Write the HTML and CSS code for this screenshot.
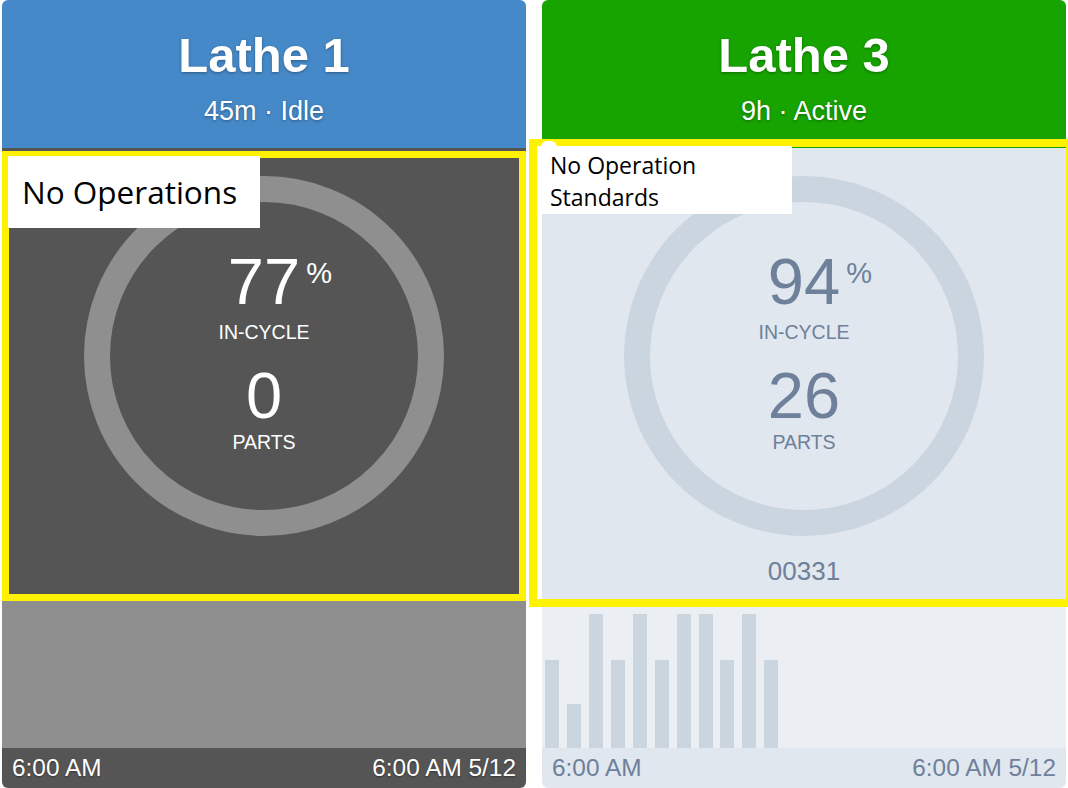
FILE: index.html
```html
<!DOCTYPE html>
<html>
<head>
<meta charset="utf-8">
<link rel="stylesheet" href="styles.css">
</head>
<body>
<div class="board">
  <section class="card idle">
    <header class="head">
      <h1 class="title">Lathe 1</h1>
      <p class="sub">45m · Idle</p>
    </header>
    <div class="body">
      <div class="ring">
        <span class="num">77<span class="pct">%</span></span>
        <span class="lbl lbl-cycle">IN-CYCLE</span>
        <span class="num num-parts">0</span>
        <span class="lbl lbl-parts">PARTS</span>
      </div>
    </div>
    <div class="chart"></div>
    <footer class="foot"><span>6:00 AM</span><span>6:00 AM 5/12</span></footer>
    <div class="mark mark-left"></div>
    <div class="note note-left">No Operations</div>
  </section>

  <section class="card active">
    <header class="head">
      <h1 class="title">Lathe 3</h1>
      <p class="sub">9h · Active</p>
    </header>
    <div class="body">
      <div class="ring">
        <span class="num">94<span class="pct">%</span></span>
        <span class="lbl lbl-cycle">IN-CYCLE</span>
        <span class="num num-parts">26</span>
        <span class="lbl lbl-parts">PARTS</span>
      </div>
      <div class="code">00331</div>
    </div>
    <div class="chart">
      <div class="bar" style="height:88px"></div>
      <div class="bar" style="height:44px"></div>
      <div class="bar" style="height:134px"></div>
      <div class="bar" style="height:88px"></div>
      <div class="bar" style="height:134px"></div>
      <div class="bar" style="height:88px"></div>
      <div class="bar" style="height:134px"></div>
      <div class="bar" style="height:134px"></div>
      <div class="bar" style="height:88px"></div>
      <div class="bar" style="height:134px"></div>
      <div class="bar" style="height:88px"></div>
    </div>
    <footer class="foot"><span>6:00 AM</span><span>6:00 AM 5/12</span></footer>
    <div class="mark mark-right"></div>
    <div class="note note-right"><span class="tab"></span>No Operation<br>Standards</div>
  </section>
</div>
</body>
</html>
```

FILE: styles.css
```css
html, body {
  margin: 0;
  padding: 0;
  background: #ffffff;
  overflow: hidden;
}

body {
  width: 1068px;
  height: 788px;
  font-family: "Liberation Sans", Arial, sans-serif;
}

.board {
  display: flex;
  gap: 16px;
  padding-left: 2px;
}

.card {
  position: relative;
  width: 524px;
  height: 788px;
  display: flex;
  flex-direction: column;
  border-radius: 6px;
}

.head {
  height: 148px;
  box-sizing: border-box;
  padding-top: 27px;
  text-align: center;
  color: #ffffff;
  border-radius: 6px 6px 0 0;
  text-shadow: 0 1px 3px rgba(0, 0, 0, 0.35);
}

.idle .head { background: #4589c8; }
.active .head { background: #17a300; }

.title {
  margin: 0;
  font-size: 49px;
  line-height: 56px;
  font-weight: bold;
}

.sub {
  margin: 12px 0 0;
  font-size: 27px;
  line-height: 32px;
}

.body {
  height: 452px;
  box-sizing: border-box;
  padding-top: 28px;
  display: flex;
  flex-direction: column;
  align-items: center;
}

.idle .body { background: #555555; color: #ffffff; }
.active .body { background: #e0e7ef; color: #6e809a; }

.ring {
  width: 360px;
  height: 360px;
  box-sizing: border-box;
  border-radius: 50%;
  border: 26px solid #8f8f8f;
  display: flex;
  flex-direction: column;
  align-items: center;
  justify-content: center;
  padding-bottom: 10px;
}

.active .ring { border-color: #cbd5df; }

.num {
  position: relative;
  font-size: 65px;
  line-height: 64px;
}

.pct {
  position: absolute;
  left: 100%;
  top: 9px;
  margin-left: 6px;
  font-size: 29px;
  line-height: 29px;
}

.lbl {
  font-size: 19.5px;
  line-height: 20px;
}

.lbl-cycle { margin-top: 8px; }
.num-parts { margin-top: 22px; }
.lbl-parts { margin-top: 4px; }

.code {
  margin-top: 20px;
  font-size: 26px;
  line-height: 30px;
}

.chart {
  height: 148px;
  box-sizing: border-box;
  display: flex;
  align-items: flex-end;
  gap: 7.9px;
  padding-left: 3.3px;
}

.idle .chart { background: #8f8f8f; }
.active .chart { background: #ebeef3; }

.bar {
  width: 14px;
  background: #cbd5df;
}

.foot {
  height: 40px;
  box-sizing: border-box;
  padding: 0 10px;
  display: flex;
  justify-content: space-between;
  font-size: 24.4px;
  line-height: 40px;
  border-radius: 0 0 6px 6px;
}

.idle .foot {
  background: #555555;
  color: #ffffff;
  text-shadow: 0 1px 2px rgba(0, 0, 0, 0.4);
}

.active .foot {
  background: #e0e7ef;
  color: #6e809a;
}

.mark {
  position: absolute;
  box-sizing: border-box;
  border: 7px solid #fff200;
}

.mark-left {
  left: 0;
  top: 151px;
  width: 524px;
  height: 450px;
}

.mark-right {
  left: -13px;
  top: 139px;
  width: 545px;
  height: 468px;
  border-width: 8px;
}

.note {
  position: absolute;
  background: #ffffff;
  color: #000000;
  font-family: "Open Sans", "Noto Sans", sans-serif;
}

.note-left {
  left: 6px;
  top: 156px;
  width: 252px;
  height: 72px;
  box-sizing: border-box;
  padding-left: 14px;
  font-size: 31.5px;
  line-height: 72px;
}

.note-right {
  left: -5px;
  top: 146px;
  width: 255px;
  height: 68px;
  box-sizing: border-box;
  padding: 3px 0 0 13px;
  font-size: 23px;
  line-height: 32px;
}

.tab {
  position: absolute;
  left: 4px;
  top: -5px;
  width: 16px;
  height: 6px;
  background: #ffffff;
  border-radius: 6px 6px 0 0;
}
```
